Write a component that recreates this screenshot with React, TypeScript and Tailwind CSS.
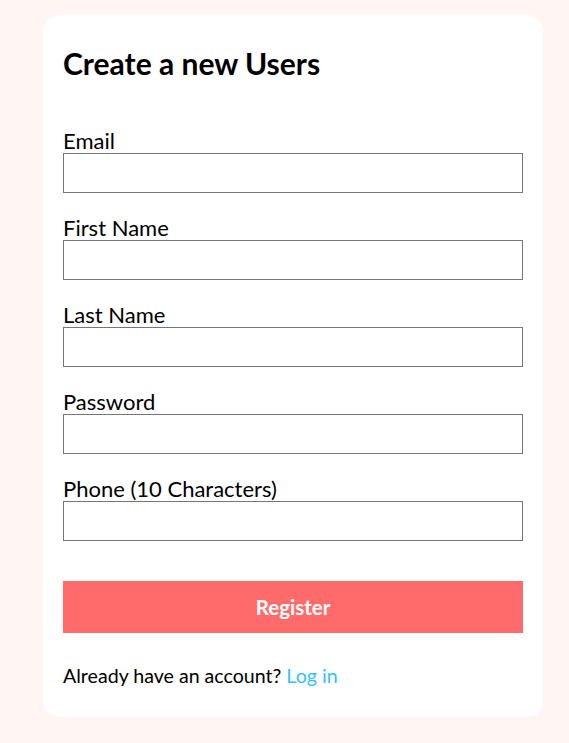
const fields = ['Email', 'First Name', 'Last Name', 'Password', 'Phone (10 Characters)'];

export default function App() {
  return (
    <div className="min-h-screen bg-[#fff5f3] pt-[15px] pb-[26px] font-['Lato',sans-serif] text-black">
      <div className="ml-[43px] w-[500px] rounded-[16px] bg-white px-[20px] pt-[31px] pb-[29px]">
        <h1 className="text-[30px] font-bold leading-[34px]">Create a new Users</h1>
        <form className="mt-[49px] flex flex-col gap-[23px]" onSubmit={(e) => e.preventDefault()}>
          {fields.map((f) => (
            <label key={f} className="flex flex-col">
              <span className="text-[22px] leading-[24px]">{f}</span>
              <input
                type={f === 'Password' ? 'password' : 'text'}
                className="h-[40px] w-full border border-[#767676] bg-white px-2 outline-none"
              />
            </label>
          ))}
          <button
            type="submit"
            className="mt-[17px] h-[52px] w-full bg-[#ff6b6b] text-[20.5px] font-bold text-white"
          >
            Register
          </button>
        </form>
        <p className="mt-[31px] text-[19.6px] leading-[24px]">
          Already have an account? <a href="#" className="text-[#33c1ff]">Log in</a>
        </p>
      </div>
    </div>
  );
}
